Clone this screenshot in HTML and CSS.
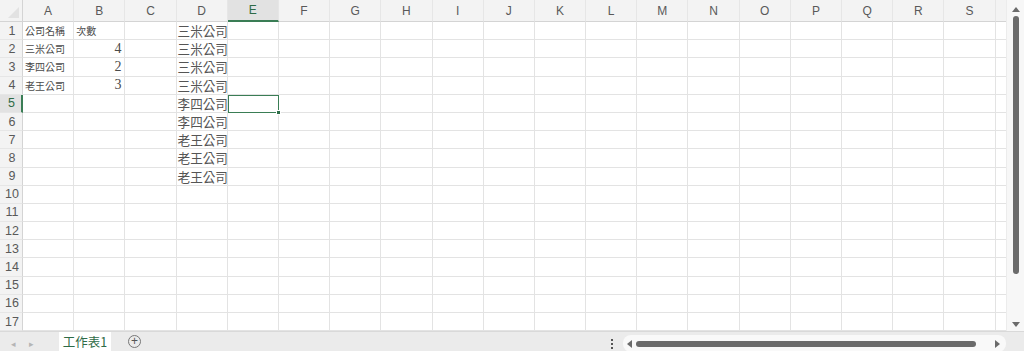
FILE: index.html
```html
<!DOCTYPE html>
<html lang="zh-Hant">
<head>
  <meta charset="UTF-8" />
  <title>工作表1</title>
  <link rel="stylesheet" href="styles.css">
</head>
<body>
  <div class="app">
    <div class="main">
      <div class="sheet" id="sheet"></div>
      <div class="vscroll">
        <span class="arrow up"></span>
        <div class="vthumb"></div>
        <span class="arrow down"></span>
      </div>
    </div>
    <div class="bottom">
      <div class="tabs">
        <span class="nav">&#9666;</span>
        <span class="nav">&#9656;</span>
        <div class="tab">工作表1</div>
        <span class="add">+</span>
      </div>
      <div class="hbar">
        <span class="dots"><i></i><i></i><i></i></span>
        <div class="hscroll">
          <span class="arrow left"></span>
          <div class="hthumb"></div>
          <span class="arrow right"></span>
        </div>
      </div>
    </div>
  </div>

  <script>
    const cols = "ABCDEFGHIJKLMNOPQRS".split("");
    const data = {
      "A1": ["公司名稱", "small"], "B1": ["次數", "small"],
      "A2": ["三米公司", "small"], "A3": ["李四公司", "small"], "A4": ["老王公司", "small"],
      "B2": ["4", "num"], "B3": ["2", "num"], "B4": ["3", "num"],
      "D1": ["三米公司", "big"], "D2": ["三米公司", "big"], "D3": ["三米公司", "big"],
      "D4": ["三米公司", "big"], "D5": ["李四公司", "big"], "D6": ["李四公司", "big"],
      "D7": ["老王公司", "big"], "D8": ["老王公司", "big"], "D9": ["老王公司", "big"]
    };
    const sheet = document.getElementById("sheet");

    function cell(cls, text) {
      const d = document.createElement("div");
      d.className = cls;
      if (text) d.textContent = text;
      sheet.appendChild(d);
      return d;
    }

    cell("corner");
    cols.forEach(c => cell(c === "E" ? "colhead active" : "colhead", c));
    cell("colhead edge");

    for (let r = 1; r <= 17; r++) {
      cell(r === 5 ? "rowhead active" : "rowhead", String(r));
      cols.forEach(c => {
        const v = data[c + r];
        const el = cell(v ? "cell " + v[1] : "cell", v ? v[0] : "");
        if (c + r === "E5") {
          el.classList.add("selected");
          const h = document.createElement("span");
          h.className = "handle";
          el.appendChild(h);
        }
      });
      cell("cell edge");
    }
  </script>
</body>
</html>
```

FILE: styles.css
```css
* {
  box-sizing: border-box;
}

body {
  margin: 0;
  background: #ffffff;
  font-family: "Noto Sans CJK TC", "Noto Sans", sans-serif;
  overflow: hidden;
}

.app {
  width: 1024px;
  height: 351px;
  display: flex;
  flex-direction: column;
}

.main {
  display: flex;
  height: 331px;
}

.sheet {
  flex: 1;
  display: grid;
  grid-template-columns: 23px repeat(19, 51.2px) 1fr;
  grid-template-rows: 22px repeat(17, 18.2px);
  overflow: hidden;
}

.corner {
  background: #f3f3f3;
  border-right: 1px solid #d4d4d4;
  border-bottom: 1px solid #d4d4d4;
  position: relative;
}

.corner::after {
  content: "";
  position: absolute;
  right: 3px;
  bottom: 3px;
  border-left: 11px solid transparent;
  border-bottom: 11px solid #e2e2e2;
}

.colhead {
  background: #f3f3f3;
  border-bottom: 1px solid #d4d4d4;
  border-right: 1px solid #e6e6e6;
  color: #595959;
  font-family: "Liberation Sans", sans-serif;
  font-size: 12px;
  display: flex;
  align-items: center;
  justify-content: center;
}

.colhead.active {
  background: #e2e2e2;
  color: #2e6b47;
  border-bottom: 2px solid #3a7d55;
}

.colhead.edge {
  border-right: none;
}

.rowhead {
  background: #f3f3f3;
  border-right: 1px solid #d4d4d4;
  border-bottom: 1px solid #e6e6e6;
  color: #595959;
  font-family: "Liberation Sans", sans-serif;
  font-size: 12.5px;
  display: flex;
  align-items: center;
  justify-content: center;
  padding-left: 2px;
}

.rowhead.active {
  background: #e2e2e2;
  color: #2e6b47;
  border-right: 2px solid #3a7d55;
}

.cell {
  border-right: 1px solid #e3e3e3;
  border-bottom: 1px solid #e3e3e3;
  display: flex;
  align-items: center;
  padding: 0 2px;
  white-space: nowrap;
  color: #4a4a4a;
  position: relative;
}

.cell.edge {
  border-right: none;
}

.small {
  font-size: 10px;
}

.num {
  justify-content: flex-end;
  font-family: "Liberation Serif", serif;
  font-size: 14px;
  padding-right: 3px;
}

.big {
  font-size: 12.6px;
  color: #555;
  overflow: visible;
  z-index: 1;
  padding-left: 1px;
}

.selected {
  outline: 1px solid #3a7d55;
  outline-offset: -1px;
  z-index: 2;
}

.handle {
  position: absolute;
  right: -3px;
  bottom: -3px;
  width: 5px;
  height: 5px;
  background: #2f6f4a;
  border: 1px solid #fff;
}

.vscroll {
  width: 18px;
  background: #f7f7f7;
  border-left: 1px solid #ececec;
  display: flex;
  flex-direction: column;
  align-items: center;
  padding: 7px 0 4px;
}

.vthumb {
  width: 6px;
  height: 258px;
  margin: 4px 0 0;
  background: #6b6b6b;
  border-radius: 3px;
}

.arrow {
  width: 0;
  height: 0;
}

.arrow.up {
  border-left: 4px solid transparent;
  border-right: 4px solid transparent;
  border-bottom: 5px solid #6b6b6b;
}

.arrow.down {
  margin-top: auto;
  border-left: 4px solid transparent;
  border-right: 4px solid transparent;
  border-top: 5px solid #6b6b6b;
}

.arrow.left {
  border-top: 4px solid transparent;
  border-bottom: 4px solid transparent;
  border-right: 5px solid #6b6b6b;
}

.arrow.right {
  margin-left: auto;
  border-top: 4px solid transparent;
  border-bottom: 4px solid transparent;
  border-left: 5px solid #6b6b6b;
}

.bottom {
  flex: 1;
  display: flex;
  background: #ebebeb;
  border-top: 1px solid #d9d9d9;
}

.tabs {
  width: 600px;
  display: flex;
  align-items: stretch;
}

.nav {
  width: 17px;
  font-size: 9px;
  color: #b5b5b5;
  display: flex;
  align-items: center;
  justify-content: center;
  margin-left: 5px;
}

.nav + .nav {
  margin-left: 1px;
}

.tab {
  margin-left: 19px;
  width: 52px;
  background: #ffffff;
  color: #2e6b47;
  font-size: 12.5px;
  display: flex;
  align-items: center;
  justify-content: center;
  border-bottom: 2px solid #3a7d55;
  margin-bottom: 2px;
}

.add {
  width: 13px;
  height: 13px;
  margin: 3px 0 0 17px;
  border: 1px solid #777;
  border-radius: 50%;
  color: #555;
  font-family: "Liberation Sans", sans-serif;
  font-size: 12px;
  line-height: 11px;
  text-align: center;
}

.hbar {
  flex: 1;
  display: flex;
  align-items: center;
}

.dots {
  width: 18px;
  margin-left: 3px;
  display: flex;
  flex-direction: column;
  align-items: center;
  gap: 2px;
}

.dots i {
  width: 2px;
  height: 2px;
  background: #555;
}

.hscroll {
  flex: 1;
  height: 17px;
  margin: 0 18px 0 2px;
  background: #f9f9f9;
  border-radius: 8px;
  display: flex;
  align-items: center;
  padding: 0 6px 0 4px;
}

.hthumb {
  width: 340px;
  height: 6px;
  margin-left: 4px;
  background: #6b6b6b;
  border-radius: 3px;
}
```
